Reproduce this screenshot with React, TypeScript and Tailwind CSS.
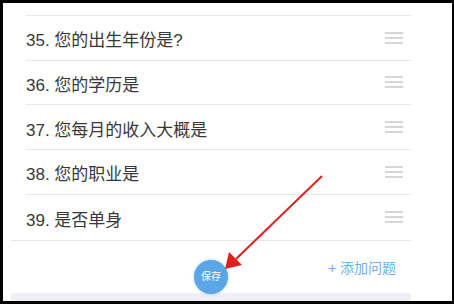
const questions = [
  "34. 您的婚姻状况是",
  "35. 您的出生年份是?",
  "36. 您的学历是",
  "37. 您每月的收入大概是",
  "38. 您的职业是",
  "39. 是否单身",
];

const DragHandle = () => (
  <svg width="18" height="12" viewBox="0 0 18 12" className="shrink-0">
    <line x1="0" y1="1" x2="18" y2="1" stroke="#c9c9c9" strokeWidth="1.5" />
    <line x1="0" y1="6" x2="18" y2="6" stroke="#c9c9c9" strokeWidth="1.5" />
    <line x1="0" y1="11" x2="18" y2="11" stroke="#c9c9c9" strokeWidth="1.5" />
  </svg>
);

export default function App() {
  return (
    <div className="h-[304px] w-[454px] bg-black pl-[3px] pt-[3px] pr-[2px] pb-[3px]">
      <div
        className="relative flex h-full w-full flex-col overflow-hidden bg-white"
        style={{ fontFamily: '"Liberation Sans", "Noto Sans CJK SC", sans-serif' }}
      >
        {/* question list */}
        <div className="-mt-[32px] ml-[8px] w-[400px] border-b border-[#e6e6e6]">
          {questions.map((q, i) => (
            <div key={q} className="pl-[15px]">
              <div
                className={
                  "flex h-[44.8px] items-center justify-between pr-[8px] " +
                  (i < questions.length - 1 ? "border-b border-[#e6e6e6]" : "")
                }
              >
                <span className="pt-[6px] text-[17px] text-[#383838]">{q}</span>
                <DragHandle />
              </div>
            </div>
          ))}
        </div>

        {/* footer */}
        <div className="relative z-10 ml-[8px] grid h-[52px] w-[400px] grid-cols-[1fr_auto_1fr]">
          <div />
          <button className="mt-[19px] flex h-[34px] w-[34px] items-center justify-center rounded-full bg-[#5ba6e6] text-[10px] text-white shadow-[0_0_3px_rgba(91,166,230,0.6)]">
            保存
          </button>
          <div className="flex justify-end pr-[15px] pt-[18px]">
            <span className="text-[14px] leading-[18px] text-[#6fb0ea]">+ 添加问题</span>
          </div>
        </div>
        <div className="ml-[8px] w-[400px] flex-1 bg-[#eef0f5]" />

        {/* annotation arrow */}
        <svg className="pointer-events-none absolute left-0 top-0 z-20" width="449" height="298">
          <line x1="319" y1="173" x2="233" y2="256" stroke="#e0201c" strokeWidth="2" />
          <polygon points="222,266 226,249 239,262" fill="#e0201c" />
        </svg>
      </div>
    </div>
  );
}
